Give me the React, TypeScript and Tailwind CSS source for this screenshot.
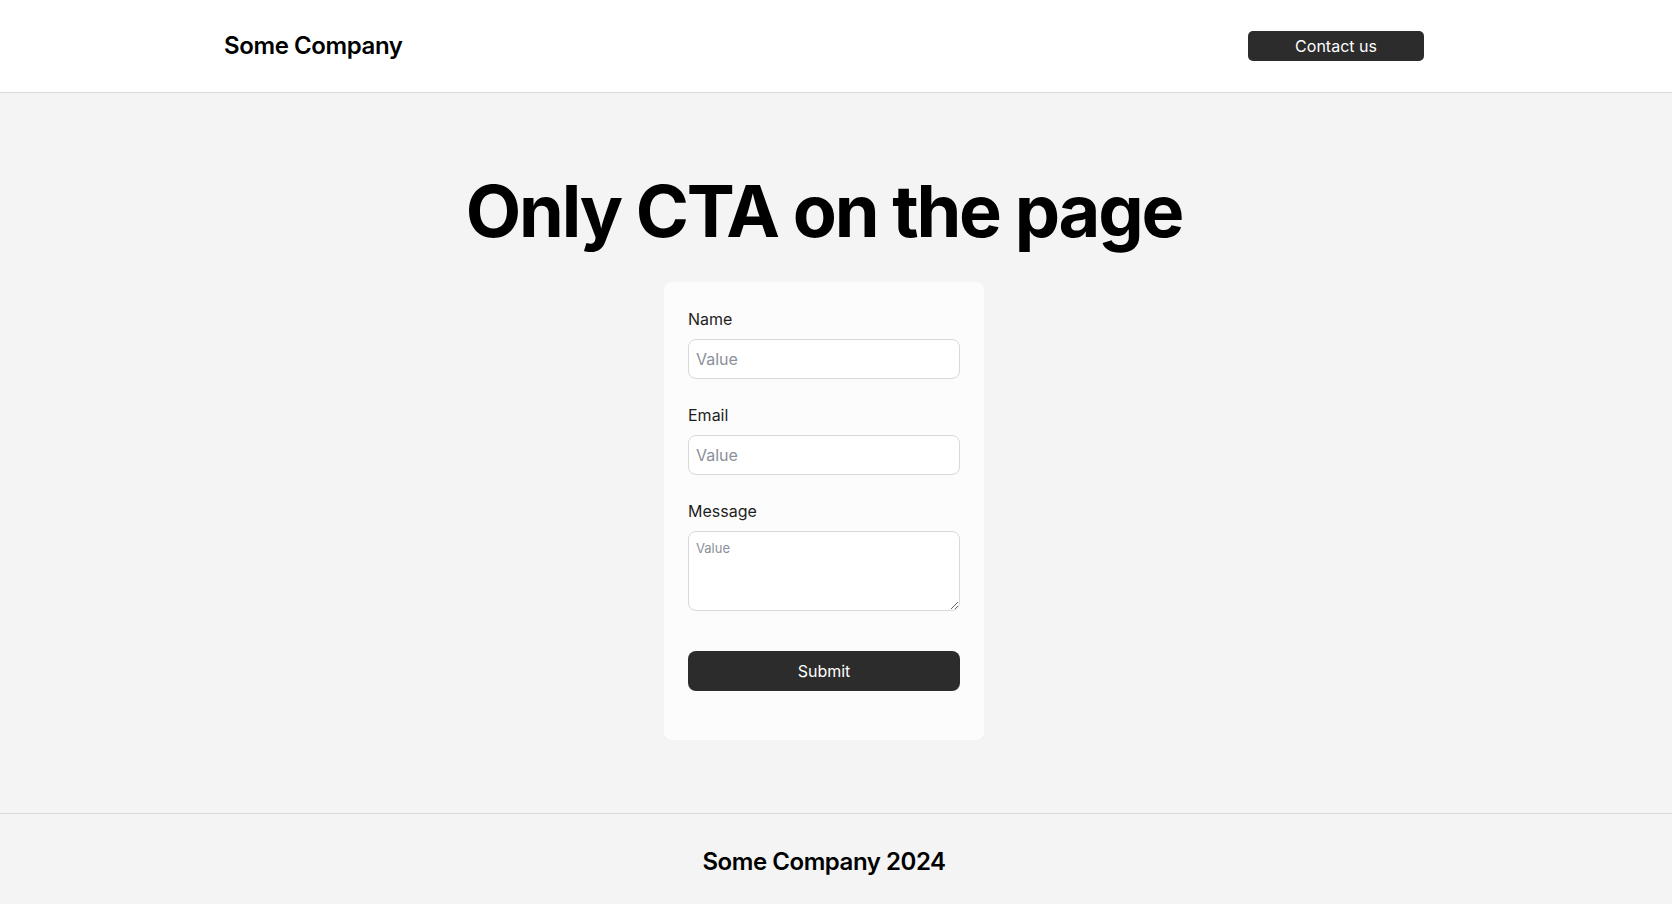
export default function App() {
  return (
    <div className="min-h-screen flex flex-col bg-[#f4f4f4] text-[#1e1e1e] font-['Inter','Liberation_Sans',sans-serif]">
      {/* Header */}
      <header className="h-[93px] bg-white border-b border-[#d9d9d9] shrink-0">
        <div className="w-[1648px] h-full px-[224px] flex items-center justify-between">
          <div className="text-[24px] font-semibold text-black tracking-[-0.4px]">Some Company</div>
          <button className="w-[176px] h-[30px] mt-[-1px] bg-[#2c2c2c] text-white text-[16px] rounded-[5px] flex items-center justify-center">
            Contact us
          </button>
        </div>
      </header>

      {/* Main */}
      <main className="flex-1">
        <div className="w-[1648px] flex flex-col items-center pt-[75px] pb-[72px]">
          <h1 className="text-[72px] leading-[86px] font-bold text-black tracking-[-2.2px]">Only CTA on the page</h1>
          <form className="mt-[28px] w-[320px] bg-[#fcfcfc] rounded-[8px] pt-[25px] pb-[49px] px-[24px] flex flex-col">
            <label className="flex flex-col gap-[8px]">
              <span className="text-[16px] leading-[24px]">Name</span>
              <input
                placeholder="Value"
                className="h-[40px] w-full bg-white border border-[#d9d9d9] rounded-[8px] px-[7px] text-[16px] placeholder:text-[#8b8f99] outline-none"
              />
            </label>
            <label className="flex flex-col gap-[8px] mt-[24px]">
              <span className="text-[16px] leading-[24px]">Email</span>
              <input
                placeholder="Value"
                className="h-[40px] w-full bg-white border border-[#d9d9d9] rounded-[8px] px-[7px] text-[16px] placeholder:text-[#8b8f99] outline-none"
              />
            </label>
            <label className="flex flex-col gap-[8px] mt-[24px]">
              <span className="text-[16px] leading-[24px]">Message</span>
              <textarea
                placeholder="Value"
                className="h-[80px] w-full bg-white border border-[#d9d9d9] rounded-[8px] px-[7px] py-[8px] text-[13px] leading-[16px] placeholder:text-[#8b8f99] outline-none"
              />
            </label>
            <button
              type="button"
              className="mt-[40px] h-[40px] w-full bg-[#2c2c2c] text-white text-[16px] rounded-[8px]"
            >
              Submit
            </button>
          </form>
        </div>
      </main>

      {/* Footer */}
      <footer className="h-[91px] border-t border-[#d9d9d9] shrink-0">
        <div className="w-[1648px] h-full flex items-center justify-center">
          <div className="text-[24px] font-semibold text-black tracking-[-0.45px] pt-[5px]">Some Company 2024</div>
        </div>
      </footer>
    </div>
  );
}
